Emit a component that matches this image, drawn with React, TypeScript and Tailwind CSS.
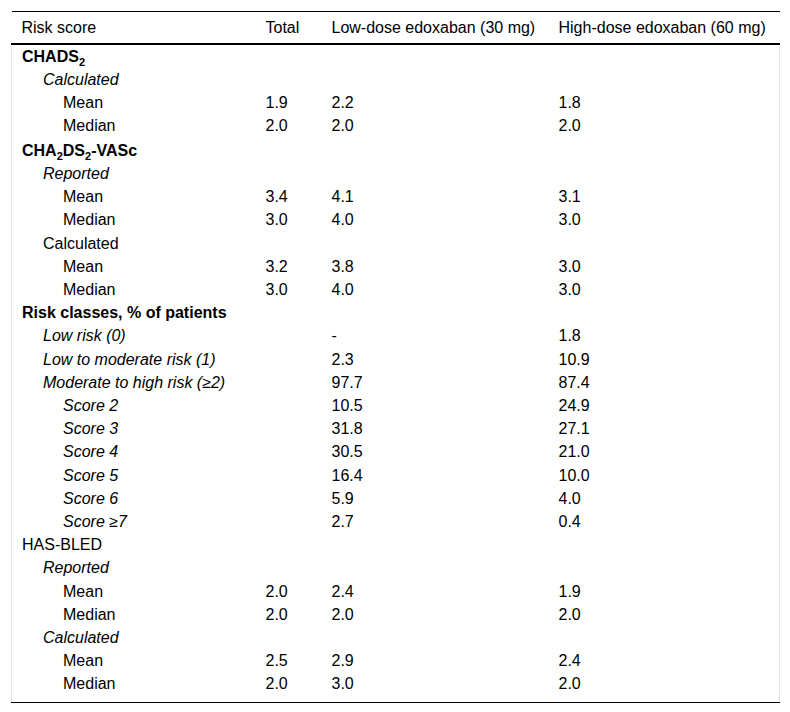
import type { ReactNode } from "react";

type Row = {
  label: ReactNode;
  level: 0 | 1 | 2;
  kind?: "bold" | "italic";
  values?: [string, string, string];
  tall?: boolean;
};

const Sub = ({ children }: { children: ReactNode }) => (
  <sub className="text-[11px] bottom-[-4px]">{children}</sub>
);

const rows: Row[] = [
  { label: <>CHADS<Sub>2</Sub></>, level: 0, kind: "bold" },
  { label: "Calculated", level: 1, kind: "italic" },
  { label: "Mean", level: 2, values: ["1.9", "2.2", "1.8"] },
  { label: "Median", level: 2, values: ["2.0", "2.0", "2.0"] },
  { label: <>CHA<Sub>2</Sub>DS<Sub>2</Sub>-VASc</>, level: 0, kind: "bold", tall: true },
  { label: "Reported", level: 1, kind: "italic" },
  { label: "Mean", level: 2, values: ["3.4", "4.1", "3.1"] },
  { label: "Median", level: 2, values: ["3.0", "4.0", "3.0"] },
  { label: "Calculated", level: 1 },
  { label: "Mean", level: 2, values: ["3.2", "3.8", "3.0"] },
  { label: "Median", level: 2, values: ["3.0", "4.0", "3.0"] },
  { label: "Risk classes, % of patients", level: 0, kind: "bold" },
  { label: "Low risk (0)", level: 1, kind: "italic", values: ["", "-", "1.8"] },
  { label: "Low to moderate risk (1)", level: 1, kind: "italic", values: ["", "2.3", "10.9"] },
  { label: "Moderate to high risk (≥2)", level: 1, kind: "italic", values: ["", "97.7", "87.4"] },
  { label: "Score 2", level: 2, kind: "italic", values: ["", "10.5", "24.9"] },
  { label: "Score 3", level: 2, kind: "italic", values: ["", "31.8", "27.1"] },
  { label: "Score 4", level: 2, kind: "italic", values: ["", "30.5", "21.0"] },
  { label: "Score 5", level: 2, kind: "italic", values: ["", "16.4", "10.0"] },
  { label: "Score 6", level: 2, kind: "italic", values: ["", "5.9", "4.0"] },
  { label: "Score ≥7", level: 2, kind: "italic", values: ["", "2.7", "0.4"] },
  { label: "HAS-BLED", level: 0 },
  { label: "Reported", level: 1, kind: "italic" },
  { label: "Mean", level: 2, values: ["2.0", "2.4", "1.9"] },
  { label: "Median", level: 2, values: ["2.0", "2.0", "2.0"] },
  { label: "Calculated", level: 1, kind: "italic" },
  { label: "Mean", level: 2, values: ["2.5", "2.9", "2.4"] },
  { label: "Median", level: 2, values: ["2.0", "3.0", "2.0"] },
];

const indent = ["pl-[10px]", "pl-[31px]", "pl-[51px]"];

export default function App() {
  return (
    <div className="bg-white w-[790px] h-[712px] pt-[11px] px-[11px] font-['Liberation_Sans',Arial,sans-serif] text-[16px] text-black">
      <table className="w-[768px] table-fixed border-collapse">
        <colgroup>
          <col className="w-[244px]" />
          <col className="w-[66px]" />
          <col className="w-[227px]" />
          <col className="w-[231px]" />
        </colgroup>
        <thead>
          <tr className="border-t border-black border-b-2 leading-[18px] text-left">
            <th className="font-normal pl-[10px] py-[6.5px] whitespace-nowrap">Risk score</th>
            <th className="font-normal pl-[10px] py-[6.5px] whitespace-nowrap">Total</th>
            <th className="font-normal pl-[10px] py-[6.5px] whitespace-nowrap">Low-dose edoxaban (30 mg)</th>
            <th className="font-normal pl-[10px] py-[6.5px] whitespace-nowrap">High-dose edoxaban (60 mg)</th>
          </tr>
        </thead>
        <tbody className="border-x border-[#e8e8e8]">
          {rows.map((r, i) => {
            const last = i === rows.length - 1;
            const pad = r.tall ? "pt-[4px] pb-[2.5px]" : last ? "pt-[2.5px] pb-[8.5px]" : "py-[2.5px]";
            return (
              <tr key={i} className={`leading-[18.2px] ${last ? "border-b border-black" : ""}`}>
                <td
                  className={`${indent[r.level]} ${pad} ${r.kind === "bold" ? "font-bold" : ""} ${
                    r.kind === "italic" ? "italic" : ""
                  } whitespace-nowrap`}
                >
                  {r.label}
                </td>
                {[0, 1, 2].map((c) => (
                  <td key={c} className={`pl-[10px] ${pad}`}>
                    {r.values ? r.values[c] : ""}
                  </td>
                ))}
              </tr>
            );
          })}
        </tbody>
      </table>
    </div>
  );
}
